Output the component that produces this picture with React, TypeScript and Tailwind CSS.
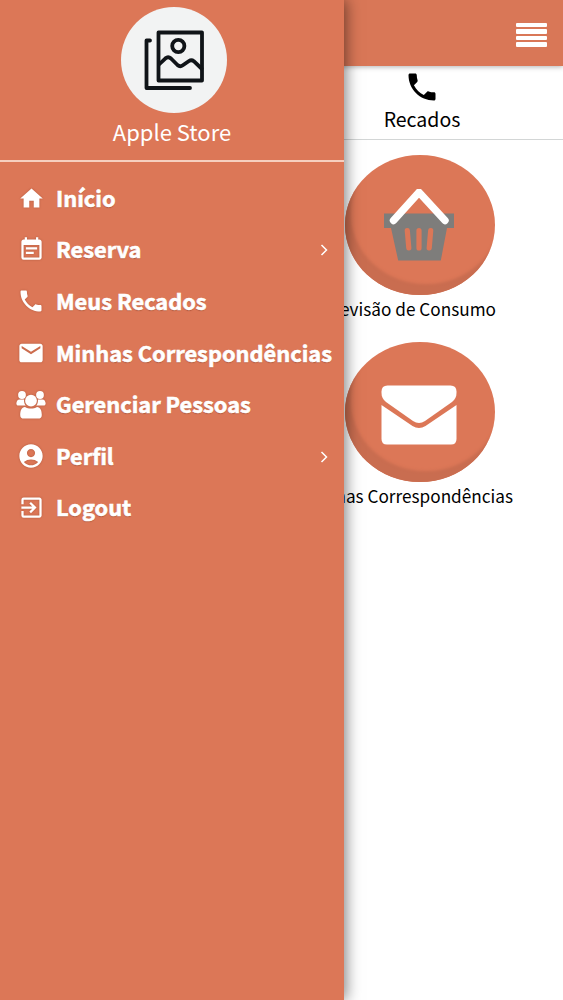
import React from 'react';
import {
  MdAccountCircle,
  MdEmail,
  MdEventNote,
  MdExitToApp,
  MdHome,
  MdPhone,
} from 'react-icons/md';

const PeopleIcon = () => (
  <svg viewBox="0 0 30 28" className="h-7 w-[30px] shrink-0" fill="currentColor">
    <circle cx="6" cy="4" r="3.9" />
    <circle cx="24" cy="4" r="3.9" />
    <path d="M3.500 8.400h4.600c-.2 2.600.4 4.700 1.700 6.200H2.600C.8 14.600.2 13.400.4 12c.3-2.200 1.200-3.400 3.100-3.600Z" />
    <path d="M26.500 8.400h-4.600c.2 2.600-.4 4.700-1.700 6.200h7.200c1.800 0 2.400-1.200 2.200-2.600-.3-2.200-1.200-3.400-3.100-3.600Z" />
    <circle cx="15" cy="9.700" r="5.900" />
    <path d="M9 15.900c3.500 2 8.500 2 12 0 3.500.3 4.800 3.600 4.800 8 0 2.500-1.400 3.700-3.700 3.700H7.900c-2.300 0-3.700-1.200-3.700-3.700 0-4.400 1.300-7.700 4.800-8Z" />
  </svg>
);

const GalleryIcon = () => (
  <svg
    viewBox="0 0 60 62"
    className="h-[62px] w-[60px]"
    fill="none"
    stroke="#101418"
    strokeWidth="3.8"
    strokeLinecap="round"
    strokeLinejoin="round"
  >
    <path d="M6 11.500H2.500V59H46" />
    <path d="M14.500 3.500H58V51.500H14.500Z" />
    <circle cx="34.300" cy="17" r="6.100" />
    <path d="M15 35.500L21.500 29.300Q24.200 27 27 29.500L33.500 36Q36 38.300 38.800 36.300L45 32Q47.500 30.300 49.800 32.200L57.500 39.500" />
  </svg>
);

const BasketIcon = () => (
  <svg viewBox="0 0 72 72" className="mr-[2px] h-[72px] w-[72px]">
    <path d="M1 24.500H71V39H64L57.800 71.500H15.200L8 39H1Z" fill="#7e7d7b" />
    <path
      d="M24.300 41.500L25.800 59M36 41.500V59M47.700 41.500L46.200 59"
      stroke="#dc7757"
      strokeWidth="5.200"
      strokeLinecap="round"
    />
    <path
      d="M10.500 31.500L36 3.200L62 31.500"
      fill="none"
      stroke="#fff"
      strokeWidth="7.400"
      strokeLinecap="round"
      strokeLinejoin="round"
    />
  </svg>
);

const EnvelopeIcon = () => (
  <svg viewBox="0 0 76 60" className="mr-[2px] mt-[6px] h-[60px] w-[76px]" fill="#fff">
    <path d="M6.500.5H69.500Q75.500.5 75.500 6.500V8Q75.500 13.500 71 17L44 36Q38 40 32 36L5 17Q.5 13.500.5 8V6.500Q.5.5 6.500.5Z" />
    <path d="M.5 20L31.500 41Q38 45 44.500 41L75.500 20V54Q75.500 59.500 70 59.500H6Q.5 59.500.5 54Z" />
  </svg>
);

const menuItems = [
  { label: 'Início', icon: <MdHome size={27} /> },
  { label: 'Reserva', icon: <MdEventNote size={27} />, arrow: true },
  { label: 'Meus Recados', icon: <MdPhone size={28} /> },
  { label: 'Minhas Correspondências', icon: <MdEmail size={28} /> },
  { label: 'Gerenciar Pessoas', icon: <PeopleIcon /> },
  { label: 'Perfil', icon: <MdAccountCircle size={28} />, arrow: true },
  { label: 'Logout', icon: <MdExitToApp size={27} /> },
];

const Drawer = () => (
  <aside className="absolute inset-y-0 left-0 z-10 w-[344px] bg-[#dc7757] text-white shadow-[2px_0_14px_rgba(0,0,0,0.5)]">
    <div className="flex h-[162px] flex-col items-center border-b-2 border-[#f6cfbf] pl-1 pt-[7px]">
      <div className="flex h-[106px] w-[106px] items-center justify-center rounded-full bg-[#f2f3f3]">
        <GalleryIcon />
      </div>
      <span className="mt-[2px] pr-1 text-[22px] leading-8">Apple Store</span>
    </div>

    <nav className="flex flex-col pt-[11px]">
      {menuItems.map((item) => (
        <a
          key={item.label}
          href="#"
          className="flex h-[51.600px] items-center pl-4 pr-4 [text-shadow:0_1px_1px_rgba(90,30,10,0.35)]"
        >
          <span className="-mt-px mr-[10px] flex w-[30px] shrink-0 justify-center drop-shadow-[0_0_1px_rgba(90,30,10,0.3)]">
            {item.icon}
          </span>
          <span className="-mt-[2px] whitespace-nowrap text-[21.800px] font-bold leading-8 [-webkit-text-stroke:0.600px_white]">
            {item.label}
          </span>
          {item.arrow && (
            <svg viewBox="0 0 8 12" className="ml-auto h-3 w-2" fill="none" stroke="#fff" strokeWidth="1.500">
              <path d="M1.500 1L6.500 6L1.500 11" />
            </svg>
          )}
        </a>
      ))}
    </nav>
  </aside>
);

const tileClass =
  'flex h-[140px] w-[150px] items-center justify-center rounded-[50%] bg-[#dc7757] shadow-[inset_6px_-11px_3px_#c96d50]';

const App = () => {
  return (
    <div
      className="relative h-[1000px] w-[563px] overflow-hidden bg-white text-black"
      style={{ fontFamily: '"Noto Sans CJK SC", "Open Sans", sans-serif' }}
    >
      {/* Top bar */}
      <header className="relative flex h-[66px] items-center justify-end bg-[#d97757] pr-4 pt-[3px] shadow-[0_1px_5px_rgba(0,0,0,0.3)]">
        <button className="flex w-[31px] flex-col gap-[2px]">
          <span className="h-[4.500px] rounded-[1px] bg-white" />
          <span className="h-[4.500px] rounded-[1px] bg-white" />
          <span className="h-[4.500px] rounded-[1px] bg-white" />
          <span className="h-[4.500px] rounded-[1px] bg-white" />
        </button>
      </header>

      {/* Tabs */}
      <div className="flex h-[74px] justify-end border-b border-[#d3d6d6]">
        <a href="#" className="flex w-[282px] flex-col items-center pt-[3px]">
          <MdPhone size={36} />
          <span className="text-[19.500px] leading-7">Recados</span>
        </a>
      </div>

      {/* Tiles */}
      <main className="flex flex-col items-end pt-[15px]">
        <a href="#" className="flex h-[187px] flex-col items-end pr-[67px]">
          <div className={tileClass + ' mr-px'}>
            <BasketIcon />
          </div>
          <span className="whitespace-nowrap text-[17.200px] leading-7">Previsão de Consumo</span>
        </a>
        <a href="#" className="flex h-[187px] flex-col items-end pr-[50px]">
          <div className={tileClass + ' mr-[18px]'}>
            <EnvelopeIcon />
          </div>
          <span className="whitespace-nowrap text-[17.200px] leading-7">Minhas Correspondências</span>
        </a>
      </main>

      <Drawer />
    </div>
  );
};

export default App;
